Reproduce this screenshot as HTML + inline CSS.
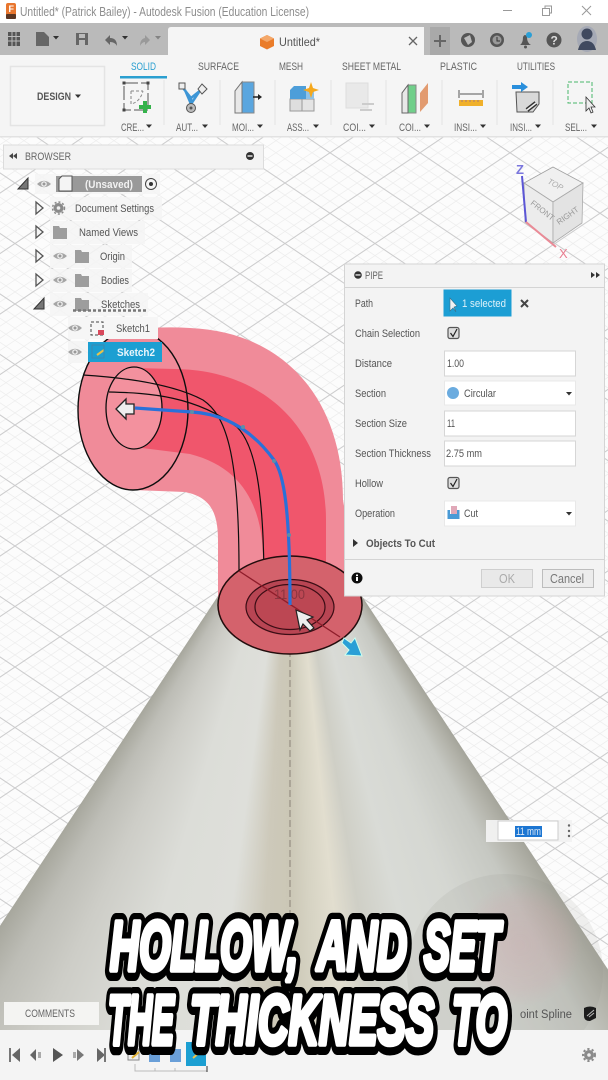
<!DOCTYPE html>
<html><head><meta charset="utf-8"><title>Fusion Pipe</title>
<style>
html,body{margin:0;padding:0;width:608px;height:1080px;overflow:hidden;background:#fcfcfc}
#cone{position:absolute;left:0;top:0;width:608px;height:1080px;
clip-path:polygon(290px 487px,636px 1012px,636px 1080px,-57px 1080px,-57px 1012px);
background:conic-gradient(from 0deg at 290px 487px,#a3a399 146.4deg,#b3b3aa 148.5deg,#c6c8c2 151.5deg,#d5d7d2 158.6deg,#d9dbd6 165.7deg,#cfcfc6 170.8deg,#e2decf 174.1deg,#d6d3c3 177.4deg,#cbc7b6 180deg,#cdc9ba 183.3deg,#dedfda 187.9deg,#dcddd8 196.7deg,#cdcdc7 204.8deg,#bdbdb6 210deg,#a6a69c 213.6deg)}
svg{position:absolute;left:0;top:0}
text{font-family:"Liberation Sans",sans-serif;font-size:11px;fill:#5a5a5a}
.l{fill:#555;font-size:11px}
.tab{fill:#666;font-size:11px}
.big{font-size:70px;font-weight:bold;font-style:italic}
.bk{fill:#000;stroke:#000;stroke-width:20px;stroke-linejoin:round}
.wh{fill:#fff;stroke:#fff;stroke-width:5.500px;stroke-linejoin:round}
</style></head>
<body>
<svg width="608" height="1080" viewBox="0 0 608 1080">
<defs>
<pattern id="g" x="15" y="667" width="90" height="60.5" patternUnits="userSpaceOnUse">
<path d="M-72 0L18 60.5M-54 0L36 60.5M-36 0L54 60.5M-18 0L72 60.5M18 0L108 60.5M36 0L126 60.5M54 0L144 60.5M72 0L162 60.5M-72 60.5L18 0M-54 60.5L36 0M-36 60.5L54 0M-18 60.5L72 0M18 60.5L108 0M36 60.5L126 0M54 60.5L144 0M72 60.5L162 0" stroke="#eeeeee" stroke-width=".8" fill="none"/>
<path d="M0 0L90 60.5M-90 0L0 60.5M90 0L180 60.5M0 60.5L90 0M-90 60.5L0 0M90 60.5L180 0" stroke="#cdcdce" stroke-width="1.100" fill="none"/>
</pattern>
</defs>
<rect y="137" width="608" height="900" fill="url(#g)"/>
</svg>
<div id="cone"></div>
<svg width="608" height="1080" viewBox="0 0 608 1080">
<defs>
<filter id="soft" x="0" y="0" width="100%" height="100%"><feGaussianBlur stdDeviation="0.35"/></filter>
<radialGradient id="wm"><stop offset="0" stop-color="#d99aa5" stop-opacity=".26"/><stop offset=".7" stop-color="#d99aa5" stop-opacity=".16"/><stop offset="1" stop-color="#d99aa5" stop-opacity="0"/></radialGradient>
<g id="eye"><path d="M-7 0Q0-6.500 7 0Q0 6.500-7 0Z" fill="#a5a5a5"/><circle r="2.800" fill="#eee"/><circle r="1.500" fill="#999"/></g>
<path id="fold" d="M0 1H6L7 3H14V14H0Z" fill="#9d9d9d"/>
<path id="tri" d="M1 0L8 6L1 12Z" fill="#f5f5f5" stroke="#555" stroke-width="1.300"/>
<path id="car" d="M-3 0H3L0 3.500Z" fill="#333"/>
</defs>
<g filter="url(#soft)">
<!-- watermark -->
<circle cx="505" cy="972" r="98" fill="#8a8a80" opacity=".12"/>
<circle cx="520" cy="945" r="62" fill="url(#wm)"/>
<!-- dashed axis -->
<path d="M290 640V925" stroke="#8b8378" stroke-width="1" stroke-dasharray="7 3"/>

<!-- pipe outer -->
<path d="M133 330Q160 326 190 328C285 332 343 400 343 500L362 612L290 620L218 606V540C218 512 210 497 185 492L133 490Z" fill="#f08b99"/>
<ellipse cx="133" cy="410" rx="55" ry="80" fill="#f08b99"/>
<!-- pipe inner band -->
<path d="M134 368L175 369C265 370 326 430 326 520L326 590L263 590L263 560C263 510 245 468 190 454L134 447Z" fill="#f0566c"/>
<ellipse cx="133" cy="410" rx="55" ry="80" fill="none" stroke="#111" stroke-width="1.400"/>
<ellipse cx="134" cy="408" rx="28" ry="41" fill="#f3919e" stroke="#111" stroke-width="1.300"/>
<!-- black edges -->
<path d="M83 375C130 378 175 385 203 400C225 415 239 450 239 570" fill="none" stroke="#111" stroke-width="1.200"/>
<path d="M109 392C150 393 195 396 237 427C255 445 264 490 264 587" fill="none" stroke="#111" stroke-width="1.200"/>
<!-- base -->
<path d="M218 606C222 540 358 540 362 606" fill="none" stroke="#111" stroke-width="1.200"/>
<ellipse cx="290" cy="605" rx="72" ry="49" fill="#d4626c" stroke="#220a0a" stroke-width="1.500"/>
<ellipse cx="290" cy="607" rx="44" ry="27.500" fill="#b84452" stroke="#3a0d12" stroke-width="1.200"/>
<ellipse cx="290" cy="607" rx="35" ry="22.500" fill="#bc4753" stroke="#3a0d12" stroke-width="1.200"/>
<path d="M239 571L340 637" stroke="#8f1f2c" stroke-width="1.300"/>
<text x="274" y="599" style="font-size:14px;fill:#8c3640" textLength="31" lengthAdjust="spacingAndGlyphs">11.00</text>
<!-- blue path -->
<path d="M135 408L192 412C225 414 252 430 274 460C284 474 290 510 290 605" fill="none" stroke="#2b71d9" stroke-width="3.200"/>
<circle cx="192" cy="412" r="2" fill="#5b8fa8"/><circle cx="243" cy="427" r="2" fill="#5b8fa8"/><circle cx="274" cy="461" r="2" fill="#5b8fa8"/><circle cx="289" cy="535" r="2" fill="#5b8fa8"/>
<!-- arrows -->
<path d="M116 409L126 399V404H134V414H126V419Z" fill="#eee" stroke="#222" stroke-width="1.300"/>
<path d="M296 610L313 617L307 620L314 628L310 631L303 624L300 630Z" fill="#eee" stroke="#222" stroke-width="1.200"/>
<path d="M344 638L351 643L355 638L362 656L345 655L349 650L342 643Z" fill="#2a9fd6" stroke="#cfe" stroke-width="1"/>

<!-- floating input -->
<rect x="486" y="820" width="86" height="22" fill="#f2f2f2" opacity=".95"/>
<rect x="498" y="821" width="60" height="19" fill="#fff" stroke="#ccc"/>
<rect x="515" y="826" width="27" height="11" fill="#1b76d2"/>
<text x="516" y="835" style="font-size:11px;fill:#dfe9f5" textLength="25" lengthAdjust="spacingAndGlyphs">11 mm</text>
<circle cx="569" cy="825.500" r="1.200" fill="#666"/><circle cx="569" cy="831" r="1.200" fill="#666"/><circle cx="569" cy="836" r="1.200" fill="#666"/>

<!-- top chrome -->
<rect width="608" height="23" fill="#fff"/>
<rect y="23" width="608" height="32" fill="#bababa"/>
<path d="M168 55V30Q168 27 171 27H424V55Z" fill="#f5f5f5"/>
<rect y="55" width="608" height="82" fill="#f5f5f5"/>
<rect y="136" width="608" height="1.500" fill="#e2e2e2"/>
<rect x="6" y="3" width="10" height="16" rx="2" fill="#e8762d"/><rect x="6" y="14" width="10" height="5" rx="1" fill="#5a3524"/><text x="8.500" y="12" style="font-size:9px;font-weight:bold;fill:#fff">F</text>
<text x="20" y="16" style="font-size:12.500px;fill:#8d8d8d" textLength="289" lengthAdjust="spacingAndGlyphs">Untitled* (Patrick Bailey) - Autodesk Fusion (Education License)</text>
<path d="M503 10.500H512" stroke="#999"/><path d="M542.500 8.500H549.500V15.500H542.500ZM545 8.500V6H551.500V13H549.500" fill="none" stroke="#999"/><path d="M582 6L591 15M591 6L582 15" stroke="#999"/>
<path d="M8 32H20V46H8Z" fill="#555"/><path d="M12 32V46M16 32V46M8 36.500H20M8 41H20" stroke="#bababa"/>
<path d="M36 32H44L49 37V46H36Z" fill="#666"/><use href="#car" x="56" y="36"/>
<path d="M76 33H88V45H76Z" fill="#666"/><rect x="79" y="34" width="6" height="4" fill="#bababa"/><rect x="79" y="40" width="6" height="5" fill="#bababa"/>
<path d="M105 40L110 35V38Q117 38 117 46Q115 42 110 42V45Z" fill="#666"/><use href="#car" x="125" y="36"/>
<path d="M150 40L145 35V38Q140 39 140 46Q142 42 145 42V45Z" fill="#999"/><use href="#car" x="158" y="36" opacity=".4"/>
<path d="M267 35L274 38.500V46L267 49.500L260 46V38.500Z" fill="#ea7b2c"/><path d="M267 42L274 38.500L267 35L260 38.500Z" fill="#f4a86a"/>
<text x="279" y="46" style="font-size:12px;fill:#555" textLength="41" lengthAdjust="spacingAndGlyphs">Untitled*</text>
<path d="M409 37L417 45M417 37L409 45" stroke="#666" stroke-width="1.300"/>
<rect x="430" y="27" width="20" height="28" fill="#a9a9a9"/><path d="M434 41H446M440 35V47" stroke="#666" stroke-width="2"/>
<circle cx="468" cy="40" r="7" fill="#555"/><path d="M464 38L470 35L472 42L468 45Z" fill="#bbb"/>
<circle cx="497" cy="40" r="7" fill="#555"/><circle cx="497" cy="40" r="4.500" fill="#999"/><path d="M497 37V41H500" stroke="#333" fill="none"/>
<path d="M520 45Q523 43 523 37Q525 33 527 37Q527 43 531 45Z" fill="#555"/><circle cx="525.500" cy="47" r="1.500" fill="#555"/><circle cx="529" cy="35" r="3" fill="#2a9fd6"/>
<circle cx="554" cy="40" r="7.500" fill="#555"/><text x="550.500" y="44.500" style="font-size:12px;font-weight:bold;fill:#ddd">?</text>
<ellipse cx="587" cy="39" rx="10" ry="13" fill="#a5a9b5"/><circle cx="587" cy="34" r="5.500" fill="#3f4a5e"/><path d="M578 50Q580 41 587 41Q594 41 596 50Z" fill="#3f4a5e"/>

<!-- design -->
<rect x="10.500" y="66.500" width="94" height="59" fill="#f6f6f6" stroke="#e4e4e4" stroke-width="1.500"/>
<text x="37" y="100" style="font-size:11px;font-weight:bold;fill:#555" textLength="34" lengthAdjust="spacingAndGlyphs">DESIGN</text><use href="#car" x="78" y="94.500"/>
<!-- tabs -->
<text x="131" y="70" class="tab" style="fill:#2a9fd0" textLength="25" lengthAdjust="spacingAndGlyphs">SOLID</text>
<rect x="120" y="76" width="47" height="2.500" fill="#2a9fd0"/>
<text x="198" y="70" class="tab" textLength="41" lengthAdjust="spacingAndGlyphs">SURFACE</text>
<text x="279" y="70" class="tab" textLength="24" lengthAdjust="spacingAndGlyphs">MESH</text>
<text x="342" y="70" class="tab" textLength="59" lengthAdjust="spacingAndGlyphs">SHEET METAL</text>
<text x="440" y="70" class="tab" textLength="37" lengthAdjust="spacingAndGlyphs">PLASTIC</text>
<text x="517" y="70" class="tab" textLength="38" lengthAdjust="spacingAndGlyphs">UTILITIES</text>
<path d="M164 80V125M220 80V125M275 80V125M331 80V125M386 80V125M442 80V125M497 80V125M553 80V125" stroke="#e3e3e3"/>
<!-- tool labels -->
<text x="121" y="131" class="tab" textLength="23" lengthAdjust="spacingAndGlyphs">CRE...</text><use href="#car" x="149" y="124.500"/>
<text x="176" y="131" class="tab" textLength="22" lengthAdjust="spacingAndGlyphs">AUT...</text><use href="#car" x="205" y="124.500"/>
<text x="232" y="131" class="tab" textLength="22" lengthAdjust="spacingAndGlyphs">MOI...</text><use href="#car" x="260" y="124.500"/>
<text x="287" y="131" class="tab" textLength="22" lengthAdjust="spacingAndGlyphs">ASS...</text><use href="#car" x="316" y="124.500"/>
<text x="343" y="131" class="tab" textLength="23" lengthAdjust="spacingAndGlyphs">COI...</text><use href="#car" x="372" y="124.500"/>
<text x="399" y="131" class="tab" textLength="22" lengthAdjust="spacingAndGlyphs">COI...</text><use href="#car" x="427" y="124.500"/>
<text x="454" y="131" class="tab" textLength="23" lengthAdjust="spacingAndGlyphs">INSI...</text><use href="#car" x="483" y="124.500"/>
<text x="510" y="131" class="tab" textLength="22" lengthAdjust="spacingAndGlyphs">INSI...</text><use href="#car" x="538" y="124.500"/>
<text x="565" y="131" class="tab" textLength="22" lengthAdjust="spacingAndGlyphs">SEL...</text><use href="#car" x="594" y="124.500"/>
<!-- create -->
<rect x="124" y="83" width="24" height="27" fill="none" stroke="#555" stroke-dasharray="14 3"/>
<path d="M131 91H143M131 91V104Q140 102 143 91" fill="none" stroke="#888" stroke-dasharray="3 2"/>
<rect x="122.500" y="81.500" width="3" height="3" fill="#444"/><rect x="146.500" y="81.500" width="3" height="3" fill="#444"/><rect x="122.500" y="108.500" width="3" height="3" fill="#444"/>
<path d="M145 101V113M139 107H151" stroke="#35b24b" stroke-width="4"/>
<!-- automate -->
<path d="M183 88L191 98L201 90M191 98V106M185 90L191 104L199 92" fill="none" stroke="#3d96d6" stroke-width="2.500"/>
<rect x="179" y="83" width="6" height="6" fill="#eee" stroke="#555"/>
<path d="M202 84L207 89L202 94L198 89Z" fill="#eee" stroke="#555"/>
<circle cx="191" cy="108" r="4.500" fill="#bbb" stroke="#555"/><circle cx="191" cy="108" r="1.500" fill="#555"/>
<!-- modify -->
<path d="M235 113V91L242 82H254V113Z" fill="#5aa6df" stroke="#888"/><path d="M235 113V91L242 82V113Z" fill="#e8e8e8" stroke="#777"/>
<path d="M253 97H259" stroke="#222" stroke-width="1.500"/><path d="M258 94L262 97L258 100Z" fill="#222"/>
<!-- assemble -->
<path d="M290 99H302V111H290Z" fill="#dedede" stroke="#999"/><path d="M302 99H314V111H302Z" fill="#e4e4e4" stroke="#999"/><path d="M290 99V90L294 86H306V99Z" fill="#4e9ed9"/><path d="M306 99V90L314 90V99Z" fill="#8fc2e8"/>
<path d="M311 82L313 88L319 90L313 92L311 98L309 92L303 90L309 88Z" fill="#f5a81c"/>
<!-- construct -->
<path d="M346 83H368V108H346Z" fill="#e9e9e9" stroke="#ddd"/><path d="M362 104H374M360 110H372" stroke="#ccc" stroke-width="2"/>
<!-- construct 2 -->
<path d="M402 113V93L408 85H416V113Z" fill="#6fcf8a" stroke="#888"/><path d="M402 113V93L408 85V113Z" fill="#e8e8e8" stroke="#666"/>
<path d="M420 112V93L428 83V103Z" fill="#e29b6f"/>
<!-- inspect -->
<path d="M459 90V98M483 90V98M460 94H482" stroke="#555"/><rect x="459" y="100" width="24" height="6" fill="#f0b02a"/><path d="M462 100v2M466 100v2M470 100v2M474 100v2M478 100v2" stroke="#a77"/>
<!-- insert -->
<path d="M516 92H539V104L533 112H517Z" fill="#d9d9d9" stroke="#555"/><path d="M512 85H521V82L528 87L521 92V89H512Z" fill="#2a8fdc"/>
<path d="M527 110L536 103" stroke="#333" stroke-width="4.500"/><path d="M527 110L536 103" stroke="#eee" stroke-width="1.500"/>
<!-- select -->
<rect x="568" y="82" width="24" height="21" fill="none" stroke="#49b86b" stroke-dasharray="4 2"/>
<path d="M586 97V111L589 108L591 113L593 112L591 107L595 107Z" fill="#eee" stroke="#333" stroke-width=".8"/>

<!-- browser -->
<rect x="3.500" y="145" width="260" height="24" fill="#f3f3f3" stroke="#dcdcdc"/>
<path d="M9 156L13 153V159ZM13 156L17 153V159Z" fill="#444"/>
<text x="25" y="160" style="font-size:11px;fill:#666" textLength="46" lengthAdjust="spacingAndGlyphs">BROWSER</text>
<circle cx="250" cy="156" r="4" fill="#333"/><rect x="247.500" y="155.300" width="5" height="1.400" fill="#eee"/>
<rect x="35" y="174" width="125" height="20" fill="#f5f5f5" opacity=".85"/>
<rect x="50" y="197" width="112" height="23" fill="#f4f4f4" opacity=".85"/>
<rect x="50" y="221" width="95" height="23" fill="#f4f4f4" opacity=".85"/>
<rect x="50" y="245" width="82" height="23" fill="#f4f4f4" opacity=".85"/>
<rect x="50" y="269" width="82" height="23" fill="#f4f4f4" opacity=".85"/>
<rect x="50" y="293" width="98" height="23" fill="#f4f4f4" opacity=".85"/>
<rect x="68" y="317" width="90" height="22" fill="#f6f6f6"/>
<rect x="68" y="341" width="20" height="22" fill="#f4f4f4" opacity=".9"/>
<path d="M18 189L28 178V189Z" fill="#777" stroke="#333"/>
<use href="#eye" x="44" y="184"/>
<rect x="56" y="176" width="86" height="16" fill="#999"/>
<path d="M59 191V179L62 176H72V191Z" fill="#f4f4f4" stroke="#555"/>
<text x="85" y="188" style="font-size:11px;font-weight:bold;fill:#f2f2f2" textLength="48" lengthAdjust="spacingAndGlyphs">(Unsaved)</text>
<circle cx="151" cy="184" r="5.500" fill="#f4f4f4" stroke="#444"/><circle cx="151" cy="184" r="2" fill="#333"/>
<use href="#tri" x="35" y="202"/>
<circle cx="58.500" cy="208" r="5" fill="#8a8a8a"/><circle cx="58.500" cy="208" r="1.800" fill="#eee"/><circle cx="58.500" cy="208" r="6" fill="none" stroke="#8a8a8a" stroke-dasharray="2 2" stroke-width="1.500"/>
<text x="75" y="212" class="l" textLength="79" lengthAdjust="spacingAndGlyphs">Document Settings</text>
<use href="#tri" x="35" y="226"/><use href="#fold" x="53" y="225"/>
<text x="79" y="236" class="l" textLength="59" lengthAdjust="spacingAndGlyphs">Named Views</text>
<use href="#tri" x="35" y="250"/><use href="#eye" x="60" y="256"/><use href="#fold" x="75" y="249"/>
<text x="100" y="260" class="l" textLength="25" lengthAdjust="spacingAndGlyphs">Origin</text>
<use href="#tri" x="35" y="274"/><use href="#eye" x="60" y="280"/><use href="#fold" x="75" y="273"/>
<text x="101" y="284" class="l" textLength="28" lengthAdjust="spacingAndGlyphs">Bodies</text>
<path d="M34 309L44 298V309Z" fill="#777" stroke="#333"/><use href="#eye" x="60" y="304"/><use href="#fold" x="75" y="297"/>
<text x="101" y="308" class="l" textLength="39" lengthAdjust="spacingAndGlyphs">Sketches</text>
<path d="M73 310.500H148" stroke="#777" stroke-width="2.500" stroke-dasharray="3 2"/>
<use href="#eye" x="75" y="328"/>
<rect x="91" y="322" width="12" height="13" fill="none" stroke="#444" stroke-dasharray="3 2"/><rect x="98" y="330" width="6" height="5" fill="#d8485c"/>
<text x="116" y="332" class="l" textLength="34" lengthAdjust="spacingAndGlyphs">Sketch1</text>
<use href="#eye" x="75" y="352"/>
<rect x="88" y="342" width="74" height="20" fill="#1f9fd2"/>
<path d="M97 355L104 350" stroke="#e9c34a" stroke-width="2"/><rect x="92" y="345" width="12" height="13" fill="none" stroke="#3a8ab0"/>
<text x="117" y="356" style="font-size:11px;font-weight:bold;fill:#eaf6fb" textLength="38" lengthAdjust="spacingAndGlyphs">Sketch2</text>

<!-- viewcube -->
<path d="M553 167L583 183L582 223L553 243L525 222L524 183Z" fill="#eaeaea"/>
<path d="M553 167L583 183L553 202L524 183Z" fill="#f0f0f0" stroke="#a0a0a0" stroke-width=".8"/>
<path d="M524 183L553 202V243L525 222Z" fill="#ececec" stroke="#aaa" stroke-width=".8"/>
<path d="M583 183L553 202V243L582 223Z" fill="#e3e3e3" stroke="#aaa" stroke-width=".8"/>
<text transform="translate(547 183) rotate(28)" style="font-size:8px;fill:#aaa;font-style:italic">TOP</text>
<text transform="translate(530 204) rotate(38)" style="font-size:8px;fill:#999">FRONT</text>
<text transform="translate(559 225) rotate(-35)" style="font-size:8px;fill:#999">RIGHT</text>
<path d="M522 176L526 222" stroke="#5b57d6" stroke-width="2"/>
<path d="M526 222L556 247" stroke="#ea8a96" stroke-width="2"/>
<text x="516" y="174" style="font-size:13px;font-weight:bold;fill:#7a76dd">Z</text>
<text x="559" y="258" style="font-size:13px;fill:#e87e90">X</text>

<!-- pipe dialog -->
<rect x="344.500" y="264" width="260" height="332" fill="#f3f3f3" stroke="#d4d4d4"/>
<path d="M345 287.500H604" stroke="#d4d4d4"/>
<circle cx="358" cy="275" r="3.800" fill="#333"/><rect x="355.500" y="274.300" width="5" height="1.300" fill="#eee"/>
<text x="365" y="279" style="font-size:11px;fill:#666" textLength="18" lengthAdjust="spacingAndGlyphs">PIPE</text>
<path d="M591 272L595 275L591 278ZM596 272L600 275L596 278Z" fill="#333"/>
<text x="355" y="307" class="l" textLength="18" lengthAdjust="spacingAndGlyphs">Path</text>
<rect x="443.500" y="289.500" width="68" height="27" fill="#1a9ed4"/>
<path d="M450 298V311L453 308L456 312L454 307L457 306Z" fill="#f2f2f2" stroke="#3a6f88" stroke-width=".6"/>
<text x="462" y="307" style="font-size:11px;fill:#dff2fa" textLength="44" lengthAdjust="spacingAndGlyphs">1 selected</text>
<path d="M521 300L528 307M528 300L521 307" stroke="#444" stroke-width="2"/>
<text x="355" y="337" class="l" textLength="65" lengthAdjust="spacingAndGlyphs">Chain Selection</text>
<rect x="448" y="327.500" width="11" height="11" rx="2" fill="#ddd" stroke="#555" stroke-width="1.200"/><path d="M450.500 333L453 336.500L457 329" fill="none" stroke="#222" stroke-width="1.200"/>
<text x="355" y="367" class="l" textLength="37" lengthAdjust="spacingAndGlyphs">Distance</text>
<rect x="444.500" y="351" width="131" height="25" fill="#fff" stroke="#d6d6d6"/><text x="447" y="367" class="l" textLength="17" lengthAdjust="spacingAndGlyphs">1.00</text>
<text x="355" y="397" class="l" textLength="31" lengthAdjust="spacingAndGlyphs">Section</text>
<rect x="444.500" y="381" width="131" height="24" fill="#fff" stroke="#e8e8e8"/>
<circle cx="453" cy="393" r="6" fill="#6aabdf"/>
<text x="464" y="397" class="l" textLength="32" lengthAdjust="spacingAndGlyphs">Circular</text><use href="#car" x="569" y="392"/>
<text x="355" y="427" class="l" textLength="52" lengthAdjust="spacingAndGlyphs">Section Size</text>
<rect x="444.500" y="411" width="131" height="25" fill="#fff" stroke="#d6d6d6"/><text x="447" y="427" class="l" textLength="8" lengthAdjust="spacingAndGlyphs">11</text>
<text x="355" y="457" class="l" textLength="76" lengthAdjust="spacingAndGlyphs">Section Thickness</text>
<rect x="444.500" y="441" width="131" height="25" fill="#fff" stroke="#d6d6d6"/><text x="446" y="457" class="l" textLength="36" lengthAdjust="spacingAndGlyphs">2.75 mm</text>
<text x="355" y="487" class="l" textLength="28" lengthAdjust="spacingAndGlyphs">Hollow</text>
<rect x="448" y="477.500" width="11" height="11" rx="2" fill="#ddd" stroke="#555" stroke-width="1.200"/><path d="M450.500 483L453 486.500L457 479" fill="none" stroke="#222" stroke-width="1.200"/>
<text x="355" y="517" class="l" textLength="40" lengthAdjust="spacingAndGlyphs">Operation</text>
<rect x="444.500" y="501" width="131" height="25" fill="#fff" stroke="#e8e8e8"/>
<rect x="451" y="506" width="6" height="8" fill="#e0a8b8"/><path d="M447.500 510V519H459.500V510H457V514H450V510Z" fill="#4a9ad6"/>
<text x="464" y="517" class="l" textLength="14" lengthAdjust="spacingAndGlyphs">Cut</text><use href="#car" x="569" y="512"/>
<path d="M353 539L358 543L353 547Z" fill="#333"/>
<text x="366" y="547" style="font-size:11px;font-weight:bold;fill:#555" textLength="69" lengthAdjust="spacingAndGlyphs">Objects To Cut</text>
<path d="M345 559.500H604" stroke="#d4d4d4"/>
<circle cx="357" cy="578" r="5.500" fill="#111"/><rect x="356" y="577" width="2" height="4" fill="#fff"/><rect x="356" y="574.500" width="2" height="1.600" fill="#fff"/>
<rect x="481.500" y="569.500" width="51" height="18" fill="#e9e9e9" stroke="#cfcfcf"/><text x="499" y="583" style="font-size:13px;fill:#aaa" textLength="16" lengthAdjust="spacingAndGlyphs">OK</text>
<rect x="542.500" y="569.500" width="51" height="18" fill="#ececec" stroke="#bdbdbd"/><text x="550" y="583" style="font-size:13px;fill:#777" textLength="34" lengthAdjust="spacingAndGlyphs">Cancel</text>

<!-- comments & timeline -->
<rect x="4" y="1002" width="95" height="23" fill="#f4f4f2"/>
<text x="25" y="1017" style="font-size:11px;fill:#666" textLength="50" lengthAdjust="spacingAndGlyphs">COMMENTS</text>
<rect y="1030" width="608" height="50" fill="#f4f4f4"/>
<text x="520" y="1018" style="font-size:11.500px;fill:#555" textLength="52" lengthAdjust="spacingAndGlyphs">oint Spline</text>
<path d="M584 1008Q590 1005 596 1008V1018L590 1021Q584 1021 584 1016Z" fill="#1a1a1a"/><path d="M587 1016L594 1010M589 1017L594 1013" stroke="#bbb"/>
<path d="M10 1048V1062" stroke="#777" stroke-width="2"/><path d="M20 1048V1062L12 1055Z" fill="#666"/>
<path d="M30 1055L36 1049V1061Z" fill="#666"/><rect x="38" y="1052" width="3" height="6" fill="#aaa"/>
<path d="M53 1048L63 1055L53 1062Z" fill="#555"/>
<rect x="73" y="1052" width="3" height="6" fill="#aaa"/><path d="M77 1049L84 1055L77 1061Z" fill="#777"/>
<path d="M97 1048L105 1055L97 1062Z" fill="#666"/><path d="M105 1048V1062" stroke="#777" stroke-width="2"/>
<circle cx="589" cy="1055" r="5" fill="#8a8a8a"/><circle cx="589" cy="1055" r="6" fill="none" stroke="#8a8a8a" stroke-width="2" stroke-dasharray="2.200 2.200"/><circle cx="589" cy="1055" r="1.800" fill="#eee"/>
<rect x="128" y="1049" width="11" height="11" fill="#eee" stroke="#888"/><path d="M132 1058L139 1052" stroke="#e0b030" stroke-width="2"/>
<rect x="149" y="1049" width="11" height="13" fill="#6a9fd8"/><rect x="170" y="1049" width="11" height="13" fill="#6a9fd8"/>
<rect x="186" y="1042" width="20" height="24" fill="#1f9fd2"/><path d="M193 1058L200 1052" stroke="#e9c34a" stroke-width="2"/>
<path d="M135 1064V1071H207M155 1068V1071M175 1068V1071" fill="none" stroke="#bbb"/><path d="M207 1066V1072" stroke="#333"/>
</g>

<!-- caption -->
<text x="110" y="971" class="big bk" textLength="188" lengthAdjust="spacingAndGlyphs">HOLLOW,</text>
<text x="317" y="971" class="big bk" textLength="90" lengthAdjust="spacingAndGlyphs">AND</text>
<text x="424" y="971" class="big bk" textLength="76" lengthAdjust="spacingAndGlyphs">SET</text>
<text x="108" y="1045" class="big bk" textLength="66" lengthAdjust="spacingAndGlyphs">THE</text>
<text x="190" y="1045" class="big bk" textLength="244" lengthAdjust="spacingAndGlyphs">THICKNESS</text>
<text x="452" y="1045" class="big bk" textLength="55" lengthAdjust="spacingAndGlyphs">TO</text>
<text x="110" y="970" class="big wh" textLength="188" lengthAdjust="spacingAndGlyphs">HOLLOW,</text>
<text x="317" y="970" class="big wh" textLength="90" lengthAdjust="spacingAndGlyphs">AND</text>
<text x="424" y="970" class="big wh" textLength="76" lengthAdjust="spacingAndGlyphs">SET</text>
<text x="108" y="1044" class="big wh" textLength="66" lengthAdjust="spacingAndGlyphs">THE</text>
<text x="190" y="1044" class="big wh" textLength="244" lengthAdjust="spacingAndGlyphs">THICKNESS</text>
<text x="452" y="1044" class="big wh" textLength="55" lengthAdjust="spacingAndGlyphs">TO</text>
</svg>
</body></html>
